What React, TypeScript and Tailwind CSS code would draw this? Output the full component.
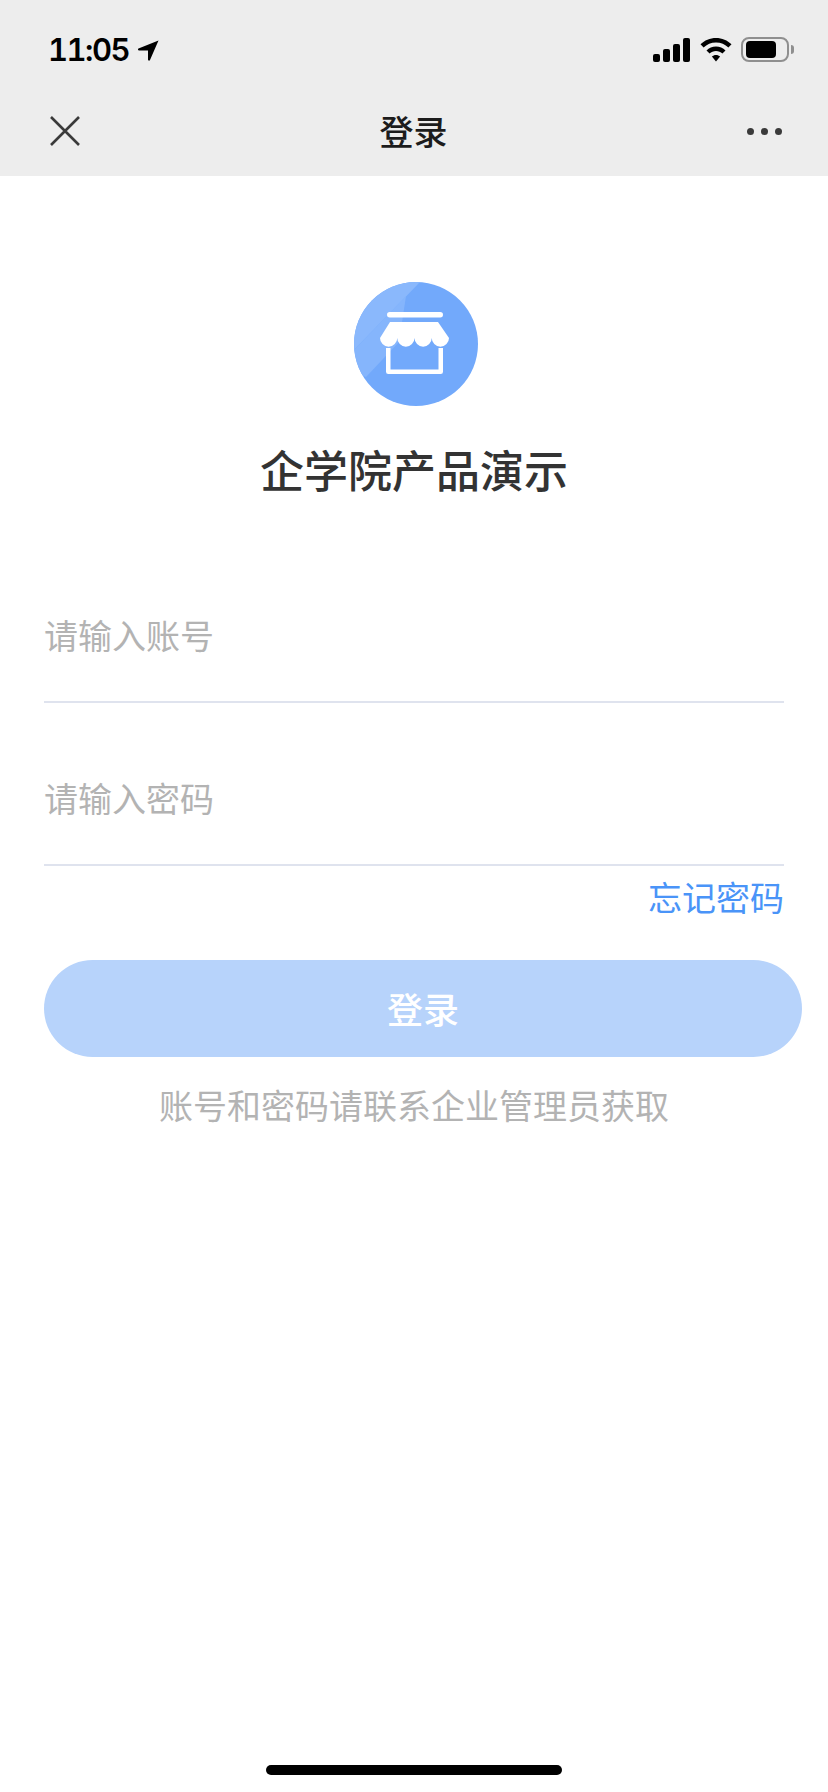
import { CSSProperties } from 'react';

const cjk: CSSProperties = { fontFamily: '"Noto Sans CJK SC", "Noto Sans", sans-serif' };

function ShopLogo() {
  return (
    <svg width="124" height="124" viewBox="0 0 124 124" className="ml-[4px]">
      <defs>
        <clipPath id="logo-circle">
          <circle cx="62" cy="62" r="62" />
        </clipPath>
      </defs>
      <g clipPath="url(#logo-circle)">
        <rect width="124" height="124" fill="#72a9fb" />
        <polygon points="66,0 0,0 0,68" fill="#8ab8fc" />
        <polygon points="52,14 0,68 0,90 12,95 45,60" fill="#85b5fc" />
      </g>
      {/* awning and shop front */}
      <rect x="33" y="30" width="56" height="5.5" rx="2.75" fill="#fff" />
      <path
        d="M36 40H84L95 56A8.625 8.625 0 0 1 77.750 56A8.625 8.625 0 0 1 60.500 56A8.625 8.625 0 0 1 43.250 56A8.625 8.625 0 0 1 26 56Z"
        fill="#fff"
      />
      <path d="M34.250 66V89.750H86.750V66" fill="none" stroke="#fff" strokeWidth="4.500" strokeLinejoin="round" />
    </svg>
  );
}

function StatusBar() {
  return (
    <div className="flex h-[88px] items-start justify-between pl-[48px] pr-[34px] pt-[32px]">
      <div className="flex items-center gap-[9px]">
        <span className="text-[31px] font-semibold leading-[36px] tracking-[-1.5px] tabular-nums text-black" style={{ fontFamily: 'Inter, sans-serif' }}>
          11:05
        </span>
        <svg width="21" height="21" viewBox="0 0 21 21">
          <path d="M20.500 0.500L0.500 8.500C-0.500 9 0 10.500 1 10.500H10V19.500C10 20.800 11.500 21 12 20L20.500 0.500Z" fill="#000" />
        </svg>
      </div>
      <div className="flex items-center gap-[9px] pt-[5px]">
        <svg width="38" height="24" viewBox="0 0 38 24">
          <rect x="0" y="16" width="7" height="8" rx="2" fill="#000" />
          <rect x="10" y="11" width="7" height="13" rx="2" fill="#000" />
          <rect x="20" y="6" width="7" height="18" rx="2" fill="#000" />
          <rect x="30" y="0" width="7" height="24" rx="2" fill="#000" />
        </svg>
        <svg width="32" height="24" viewBox="0 0 32 24">
          <path d="M16 0C22 0 27.500 2.300 31.500 6.300L28.400 9.500C25.200 6.300 20.800 4.400 16 4.400C11.200 4.400 6.800 6.300 3.600 9.500L0.500 6.300C4.500 2.300 10 0 16 0Z" fill="#000" />
          <path d="M16 8.500C19.700 8.500 23 10 25.500 12.400L22.400 15.500C20.700 13.900 18.500 12.900 16 12.900C13.500 12.900 11.300 13.900 9.600 15.500L6.500 12.400C9 10 12.300 8.500 16 8.500Z" fill="#000" />
          <path d="M16 17C17.600 17 19 17.600 20.100 18.600L16 23.500L11.900 18.600C13 17.600 14.400 17 16 17Z" fill="#000" />
        </svg>
        <div className="flex items-center gap-[2px]">
          <div className="flex h-[25px] w-[48px] items-center rounded-[8px] border-2 border-[#8f8f8f] px-[3px]">
            <div className="h-[17px] w-[30px] rounded-[4px] bg-black" />
          </div>
          <div className="h-[9px] w-[3px] rounded-r-full bg-[#8f8f8f]" />
        </div>
      </div>
    </div>
  );
}

function NavBar() {
  return (
    <div className="flex h-[88px] items-center justify-between pb-[2px] pl-[50px] pr-[46px]">
      <svg width="30" height="30" viewBox="0 0 30 30">
        <path d="M1 1L29 29M29 1L1 29" stroke="#3a3a3a" strokeWidth="2.600" fill="none" />
      </svg>
      <span className="text-[34px] font-medium leading-[48px] text-[#1c1c1c]" style={cjk}>
        登录
      </span>
      <div className="flex gap-[7px]">
        <div className="h-[7px] w-[7px] rounded-full bg-[#3a3a3a]" />
        <div className="h-[7px] w-[7px] rounded-full bg-[#3a3a3a]" />
        <div className="h-[7px] w-[7px] rounded-full bg-[#3a3a3a]" />
      </div>
    </div>
  );
}

export default function App() {
  return (
    <div className="flex h-[1792px] w-[828px] flex-col overflow-hidden bg-white" style={cjk}>
      <header className="bg-[#ededed]">
        <StatusBar />
        <NavBar />
      </header>

      <main className="flex flex-1 flex-col">
        <div className="flex flex-col items-center pt-[106px]">
          <ShopLogo />
          <h1 className="mt-[31px] text-[44px] font-medium leading-[64px] text-[#333333]">企学院产品演示</h1>
        </div>

        <div className="ml-[44px] mt-[68px] flex w-[740px] flex-col">
          <input
            className="h-[134px] border-b-2 border-[#dfe3ee] pb-[2px] text-[34px] text-[#333333] outline-none placeholder:text-[#b3b3b3]"
            style={cjk}
            placeholder="请输入账号"
          />
          <input
            className="mt-[29px] h-[134px] border-b-2 border-[#dfe3ee] pb-[2px] text-[34px] text-[#333333] outline-none placeholder:text-[#b3b3b3]"
            style={cjk}
            placeholder="请输入密码"
          />
          <a className="mt-[7px] self-end text-[34px] leading-[48px] text-[#4a94f8]">忘记密码</a>
        </div>

        <button className="ml-[44px] mt-[39px] h-[97px] w-[758px] rounded-full bg-[#b7d3fb] pb-[2px] text-[36px] font-medium text-white">
          登录
        </button>
        <p className="mt-[24px] text-center text-[34px] leading-[48px] text-[#b3b3b3]">
          账号和密码请联系企业管理员获取
        </p>

        <div className="mb-[17px] mt-auto flex justify-center">
          <div className="h-[10px] w-[296px] rounded-full bg-black" />
        </div>
      </main>
    </div>
  );
}
